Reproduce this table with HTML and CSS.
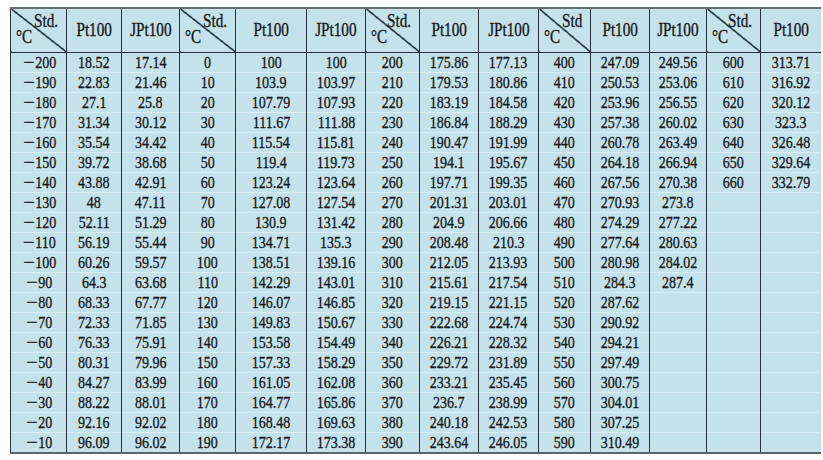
FILE: index.html
```html
<!DOCTYPE html>
<html lang="en">
<head>
<meta charset="utf-8">
<title>Pt100 / JPt100 resistance table</title>
<link rel="stylesheet" href="styles.css">
</head>
<body>
<table class="tbl">
<colgroup>
<col class="w56"><col class="w55"><col class="w58">
<col class="w56"><col class="w71"><col class="w59">
<col class="w54"><col class="w59"><col class="w60">
<col class="w52"><col class="w59"><col class="w57">
<col class="w54"><col class="w60">
</colgroup>
<thead>
<tr>
<th class="diag"><div class="std"><span>Std.</span></div><div class="deg"><span>°C</span></div></th><th><span>Pt100</span></th><th><span>JPt100</span></th>
<th class="diag"><div class="std"><span>Std.</span></div><div class="deg"><span>°C</span></div></th><th><span>Pt100</span></th><th><span>JPt100</span></th>
<th class="diag"><div class="std"><span>Std.</span></div><div class="deg"><span>°C</span></div></th><th><span>Pt100</span></th><th><span>JPt100</span></th>
<th class="diag"><div class="std"><span>Std</span></div><div class="deg"><span>°C</span></div></th><th><span>Pt100</span></th><th><span>JPt100</span></th>
<th class="diag"><div class="std"><span>Std.</span></div><div class="deg"><span>°C</span></div></th><th><span>Pt100</span></th>
</tr>
</thead>
<tbody>
<tr><td class="neg"><span><b class="mn">−</b>200</span></td><td><span>18.52</span></td><td><span>17.14</span></td><td><span>0</span></td><td><span>100</span></td><td><span>100</span></td><td><span>200</span></td><td><span>175.86</span></td><td><span>177.13</span></td><td><span>400</span></td><td><span>247.09</span></td><td><span>249.56</span></td><td><span>600</span></td><td><span>313.71</span></td></tr>
<tr><td class="neg"><span><b class="mn">−</b>190</span></td><td><span>22.83</span></td><td><span>21.46</span></td><td><span>10</span></td><td><span>103.9</span></td><td><span>103.97</span></td><td><span>210</span></td><td><span>179.53</span></td><td><span>180.86</span></td><td><span>410</span></td><td><span>250.53</span></td><td><span>253.06</span></td><td><span>610</span></td><td><span>316.92</span></td></tr>
<tr><td class="neg"><span><b class="mn">−</b>180</span></td><td><span>27.1</span></td><td><span>25.8</span></td><td><span>20</span></td><td><span>107.79</span></td><td><span>107.93</span></td><td><span>220</span></td><td><span>183.19</span></td><td><span>184.58</span></td><td><span>420</span></td><td><span>253.96</span></td><td><span>256.55</span></td><td><span>620</span></td><td><span>320.12</span></td></tr>
<tr><td class="neg"><span><b class="mn">−</b>170</span></td><td><span>31.34</span></td><td><span>30.12</span></td><td><span>30</span></td><td><span>111.67</span></td><td><span>111.88</span></td><td><span>230</span></td><td><span>186.84</span></td><td><span>188.29</span></td><td><span>430</span></td><td><span>257.38</span></td><td><span>260.02</span></td><td><span>630</span></td><td><span>323.3</span></td></tr>
<tr><td class="neg"><span><b class="mn">−</b>160</span></td><td><span>35.54</span></td><td><span>34.42</span></td><td><span>40</span></td><td><span>115.54</span></td><td><span>115.81</span></td><td><span>240</span></td><td><span>190.47</span></td><td><span>191.99</span></td><td><span>440</span></td><td><span>260.78</span></td><td><span>263.49</span></td><td><span>640</span></td><td><span>326.48</span></td></tr>
<tr><td class="neg"><span><b class="mn">−</b>150</span></td><td><span>39.72</span></td><td><span>38.68</span></td><td><span>50</span></td><td><span>119.4</span></td><td><span>119.73</span></td><td><span>250</span></td><td><span>194.1</span></td><td><span>195.67</span></td><td><span>450</span></td><td><span>264.18</span></td><td><span>266.94</span></td><td><span>650</span></td><td><span>329.64</span></td></tr>
<tr><td class="neg"><span><b class="mn">−</b>140</span></td><td><span>43.88</span></td><td><span>42.91</span></td><td><span>60</span></td><td><span>123.24</span></td><td><span>123.64</span></td><td><span>260</span></td><td><span>197.71</span></td><td><span>199.35</span></td><td><span>460</span></td><td><span>267.56</span></td><td><span>270.38</span></td><td><span>660</span></td><td><span>332.79</span></td></tr>
<tr><td class="neg"><span><b class="mn">−</b>130</span></td><td><span>48</span></td><td><span>47.11</span></td><td><span>70</span></td><td><span>127.08</span></td><td><span>127.54</span></td><td><span>270</span></td><td><span>201.31</span></td><td><span>203.01</span></td><td><span>470</span></td><td><span>270.93</span></td><td><span>273.8</span></td><td></td><td></td></tr>
<tr><td class="neg"><span><b class="mn">−</b>120</span></td><td><span>52.11</span></td><td><span>51.29</span></td><td><span>80</span></td><td><span>130.9</span></td><td><span>131.42</span></td><td><span>280</span></td><td><span>204.9</span></td><td><span>206.66</span></td><td><span>480</span></td><td><span>274.29</span></td><td><span>277.22</span></td><td></td><td></td></tr>
<tr><td class="neg"><span><b class="mn">−</b>110</span></td><td><span>56.19</span></td><td><span>55.44</span></td><td><span>90</span></td><td><span>134.71</span></td><td><span>135.3</span></td><td><span>290</span></td><td><span>208.48</span></td><td><span>210.3</span></td><td><span>490</span></td><td><span>277.64</span></td><td><span>280.63</span></td><td></td><td></td></tr>
<tr><td class="neg"><span><b class="mn">−</b>100</span></td><td><span>60.26</span></td><td><span>59.57</span></td><td><span>100</span></td><td><span>138.51</span></td><td><span>139.16</span></td><td><span>300</span></td><td><span>212.05</span></td><td><span>213.93</span></td><td><span>500</span></td><td><span>280.98</span></td><td><span>284.02</span></td><td></td><td></td></tr>
<tr><td class="neg"><span><b class="mn">−</b>90</span></td><td><span>64.3</span></td><td><span>63.68</span></td><td><span>110</span></td><td><span>142.29</span></td><td><span>143.01</span></td><td><span>310</span></td><td><span>215.61</span></td><td><span>217.54</span></td><td><span>510</span></td><td><span>284.3</span></td><td><span>287.4</span></td><td></td><td></td></tr>
<tr><td class="neg"><span><b class="mn">−</b>80</span></td><td><span>68.33</span></td><td><span>67.77</span></td><td><span>120</span></td><td><span>146.07</span></td><td><span>146.85</span></td><td><span>320</span></td><td><span>219.15</span></td><td><span>221.15</span></td><td><span>520</span></td><td><span>287.62</span></td><td></td><td></td><td></td></tr>
<tr><td class="neg"><span><b class="mn">−</b>70</span></td><td><span>72.33</span></td><td><span>71.85</span></td><td><span>130</span></td><td><span>149.83</span></td><td><span>150.67</span></td><td><span>330</span></td><td><span>222.68</span></td><td><span>224.74</span></td><td><span>530</span></td><td><span>290.92</span></td><td></td><td></td><td></td></tr>
<tr><td class="neg"><span><b class="mn">−</b>60</span></td><td><span>76.33</span></td><td><span>75.91</span></td><td><span>140</span></td><td><span>153.58</span></td><td><span>154.49</span></td><td><span>340</span></td><td><span>226.21</span></td><td><span>228.32</span></td><td><span>540</span></td><td><span>294.21</span></td><td></td><td></td><td></td></tr>
<tr><td class="neg"><span><b class="mn">−</b>50</span></td><td><span>80.31</span></td><td><span>79.96</span></td><td><span>150</span></td><td><span>157.33</span></td><td><span>158.29</span></td><td><span>350</span></td><td><span>229.72</span></td><td><span>231.89</span></td><td><span>550</span></td><td><span>297.49</span></td><td></td><td></td><td></td></tr>
<tr><td class="neg"><span><b class="mn">−</b>40</span></td><td><span>84.27</span></td><td><span>83.99</span></td><td><span>160</span></td><td><span>161.05</span></td><td><span>162.08</span></td><td><span>360</span></td><td><span>233.21</span></td><td><span>235.45</span></td><td><span>560</span></td><td><span>300.75</span></td><td></td><td></td><td></td></tr>
<tr><td class="neg"><span><b class="mn">−</b>30</span></td><td><span>88.22</span></td><td><span>88.01</span></td><td><span>170</span></td><td><span>164.77</span></td><td><span>165.86</span></td><td><span>370</span></td><td><span>236.7</span></td><td><span>238.99</span></td><td><span>570</span></td><td><span>304.01</span></td><td></td><td></td><td></td></tr>
<tr><td class="neg"><span><b class="mn">−</b>20</span></td><td><span>92.16</span></td><td><span>92.02</span></td><td><span>180</span></td><td><span>168.48</span></td><td><span>169.63</span></td><td><span>380</span></td><td><span>240.18</span></td><td><span>242.53</span></td><td><span>580</span></td><td><span>307.25</span></td><td></td><td></td><td></td></tr>
<tr><td class="neg"><span><b class="mn">−</b>10</span></td><td><span>96.09</span></td><td><span>96.02</span></td><td><span>190</span></td><td><span>172.17</span></td><td><span>173.38</span></td><td><span>390</span></td><td><span>243.64</span></td><td><span>246.05</span></td><td><span>590</span></td><td><span>310.49</span></td><td></td><td></td><td></td></tr>
</tbody>
</table>
</body>
</html>
```
FILE: styles.css
```css
html, body {
  margin: 0;
  padding: 0;
  background: #ffffff;
}

body {
  font-family: "Liberation Serif", "Times New Roman", serif;
  color: #15191b;
}

.tbl {
  margin: 7px 0 0 10px;
  border-collapse: collapse;
  table-layout: fixed;
  width: 810px;
  background: #c5e2ea;
}

.w52 { width: 52px; }
.w54 { width: 54px; }
.w55 { width: 55px; }
.w56 { width: 56px; }
.w57 { width: 57px; }
.w58 { width: 58px; }
.w59 { width: 59px; }
.w60 { width: 60px; }
.w71 { width: 71px; }

.tbl th,
.tbl td {
  padding: 0;
  text-align: center;
  border-left: 1.5px solid #22313a;
  white-space: nowrap;
}

.tbl thead tr {
  height: 44px;
}

.tbl th {
  border-top: 2px solid #646e73;
  border-bottom: 1.5px solid #22313a;
  font-weight: normal;
  font-size: 19px;
  vertical-align: middle;
}

.tbl span {
  display: inline-block;
  transform: scaleX(0.8);
  -webkit-text-stroke: 0.35px #15191b;
}

.mn {
  display: inline-block;
  font-weight: normal;
  transform: scaleX(1.45);
  margin-right: 3px;
}

.tbl td.neg {
  padding-left: 4px;
}

.tbl th.diag {
  vertical-align: top;
  padding-top: 4px;
  background: linear-gradient(to top right,
    transparent calc(50% - 1px),
    #22313a calc(50% - 0.6px),
    #22313a calc(50% + 0.6px),
    transparent calc(50% + 1px));
}

.std {
  text-align: right;
  padding-right: 8px;
  line-height: 16px;
  font-size: 19px;
}

.std span {
  transform-origin: right center;
}

.deg {
  text-align: left;
  padding-left: 5px;
  line-height: 16px;
  font-size: 19px;
}

.deg span {
  transform-origin: left center;
}

.tbl tbody tr {
  height: 20px;
}

.tbl td {
  font-size: 17.5px;
  line-height: 19px;
  border-top: 1px solid #dbeef4;
}

.tbl tbody tr:last-child td {
  border-bottom: 2px solid #5a656a;
}
```
